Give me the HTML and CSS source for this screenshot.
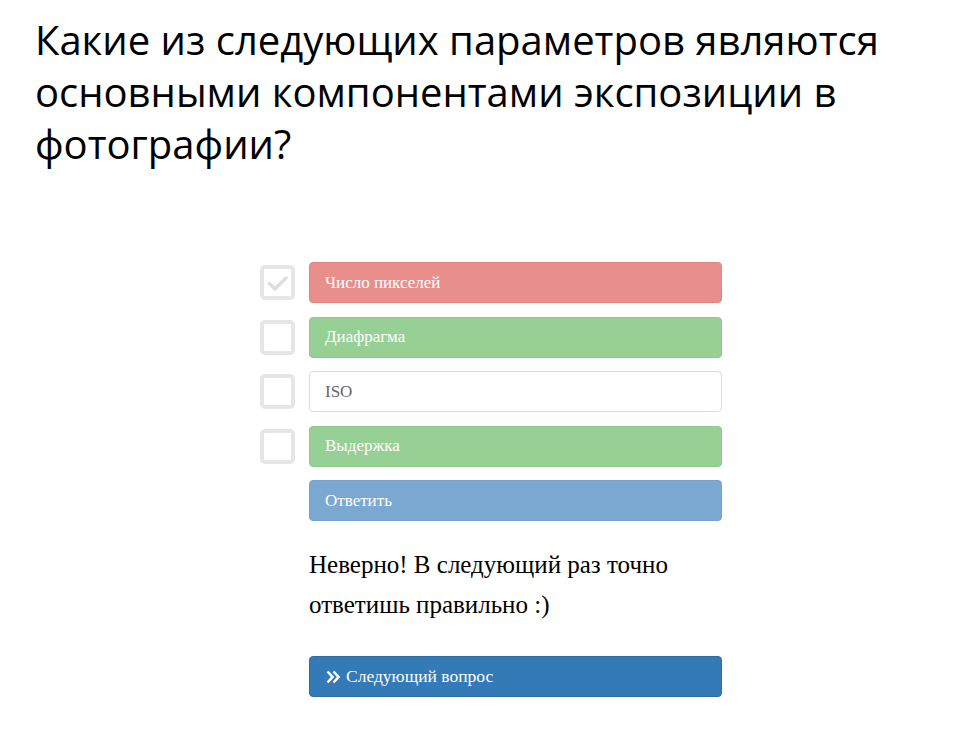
FILE: index.html
```html
<!DOCTYPE html>
<html lang="ru">
<head>
<meta charset="utf-8">
<link rel="stylesheet" href="styles.css">
</head>
<body>
<div class="page">
  <h1 class="question">Какие из следующих параметров являются основными компонентами экспозиции в фотографии?</h1>
  <div class="quiz">
    <div class="row">
      <span class="check checked"><svg viewBox="0 0 27 27" width="27" height="27"><path d="M5.5 14.5l5.5 5.5L22 9" fill="none" stroke="#dedede" stroke-width="3.5" stroke-linecap="round" stroke-linejoin="round"/></svg></span>
      <div class="opt wrong">Число пикселей</div>
    </div>
    <div class="row">
      <span class="check"></span>
      <div class="opt right">Диафрагма</div>
    </div>
    <div class="row">
      <span class="check"></span>
      <div class="opt plain">ISO</div>
    </div>
    <div class="row">
      <span class="check"></span>
      <div class="opt right">Выдержка</div>
    </div>
    <div class="row">
      <span class="spacer"></span>
      <div class="opt answer">Ответить</div>
    </div>
    <div class="row result-row">
      <span class="spacer"></span>
      <p class="result">Неверно! В следующий раз точно ответишь правильно :)</p>
    </div>
    <div class="row">
      <span class="spacer"></span>
      <div class="opt next"><svg class="chev" viewBox="0 0 16 16" width="16" height="16"><path d="M2.5 2.5L7.5 8l-5 5.5M8.5 2.5L13.5 8l-5 5.5" fill="none" stroke="#fff" stroke-width="2.6" stroke-linejoin="miter"/></svg>Следующий вопрос</div>
    </div>
  </div>
</div>
</body>
</html>
```
FILE: styles.css
```css
* { box-sizing: border-box; }
html, body { margin: 0; padding: 0; background: #fff; }
.page { padding: 14px 35px 0 35px; }
.question {
  font-family: "Open Sans", sans-serif;
  font-weight: 400;
  font-size: 40px;
  line-height: 52px;
  color: #000;
  margin: 0;
  max-width: 880px;
}
.quiz {
  margin: 92px 0 0 225px;
  display: flex;
  flex-direction: column;
  gap: 13.5px;
}
.row { display: flex; align-items: center; gap: 14px; }
.check, .spacer { width: 35px; height: 35px; flex: none; }
.check {
  border: 4px solid #e6e6e6;
  border-radius: 5px;
  display: flex; align-items: center; justify-content: center;
}
.opt {
  width: 413px;
  height: 41px;
  border-radius: 4px;
  border: 1px solid transparent;
  font-family: "Liberation Serif", serif;
  font-size: 17px;
  color: #fff;
  display: flex; align-items: center;
  padding: 0 15px;
}
.wrong { background: #e88f8b; border-color: #e3837e; }
.right { background: #96d095; border-color: #8cc98b; }
.plain { background: #fff; border-color: #dcdcdc; color: #666; }
.answer { background: #7ba8d1; border-color: #76a3cc; }
.next { background: #337ab7; border-color: #2e6da4; font-size: 17.5px; }
.chev { margin-right: 5px; }
.result-row { align-items: flex-start; margin: 10px 0 18px; }
.result {
  margin: 0;
  width: 413px;
  font-family: "Liberation Serif", serif;
  font-size: 25px;
  line-height: 40px;
  color: #000;
}
```
